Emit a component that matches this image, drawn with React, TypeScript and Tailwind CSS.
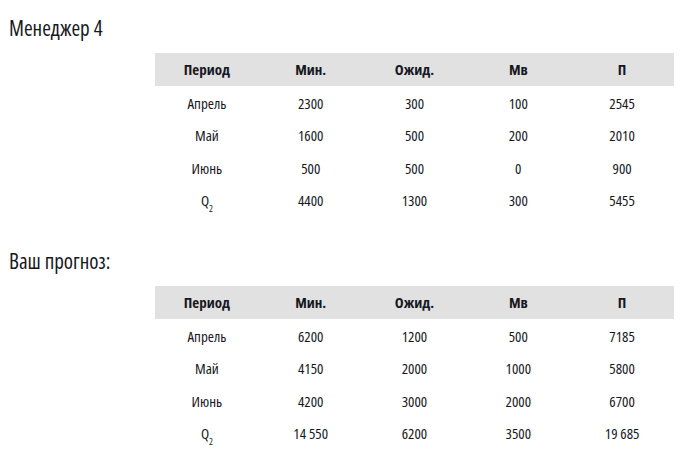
import React from 'react';

interface Row {
  period: string;
  min: string;
  exp: string;
  mv: string;
  p: string;
}

const manager: Row[] = [
  { period: 'Апрель', min: '2300', exp: '300', mv: '100', p: '2545' },
  { period: 'Май', min: '1600', exp: '500', mv: '200', p: '2010' },
  { period: 'Июнь', min: '500', exp: '500', mv: '0', p: '900' },
  { period: 'Q2', min: '4400', exp: '1300', mv: '300', p: '5455' },
];

const forecast: Row[] = [
  { period: 'Апрель', min: '6200', exp: '1200', mv: '500', p: '7185' },
  { period: 'Май', min: '4150', exp: '2000', mv: '1000', p: '5800' },
  { period: 'Июнь', min: '4200', exp: '3000', mv: '2000', p: '6700' },
  { period: 'Q2', min: '14 550', exp: '6200', mv: '3500', p: '19 685' },
];

const headers = ['Период', 'Мин.', 'Ожид.', 'Мв', 'П'];

const PeriodCell = ({ value }: { value: string }) =>
  value === 'Q2' ? (
    <span>
      Q<sub className="text-[9px] align-[-4px]">2</sub>
    </span>
  ) : (
    <span>{value}</span>
  );

const ForecastTable = ({ rows }: { rows: Row[] }) => (
  <table className="ml-[146px] w-[519px] table-fixed border-collapse text-center text-[15px] font-medium">
    <thead>
      <tr className="bg-[#e1e1e1] h-[33px]">
        {headers.map((h) => (
          <th key={h} className="font-bold">
            {h}
          </th>
        ))}
      </tr>
    </thead>
    <tbody>
      {rows.map((r) => (
        <tr key={r.period} className="h-[32.5px]">
          <td className="pt-[1px]">
            <PeriodCell value={r.period} />
          </td>
          <td className="pt-[1px]">{r.min}</td>
          <td className="pt-[1px]">{r.exp}</td>
          <td className="pt-[1px]">{r.mv}</td>
          <td className="pt-[1px]">{r.p}</td>
        </tr>
      ))}
    </tbody>
  </table>
);

export default function App() {
  return (
    <div className="w-[683px] h-[463px] bg-white px-[9px] pt-[16px] text-[#17171f] font-['Open_Sans',sans-serif] font-stretch-[75%]">
      <h2 className="text-[21px] leading-[24px] font-medium">Менеджер 4</h2>
      <div className="mt-[13px]">
        <ForecastTable rows={manager} />
      </div>
      <h2 className="mt-[33px] text-[21px] leading-[24px] font-medium">Ваш прогноз:</h2>
      <div className="mt-[13px]">
        <ForecastTable rows={forecast} />
      </div>
    </div>
  );
}
